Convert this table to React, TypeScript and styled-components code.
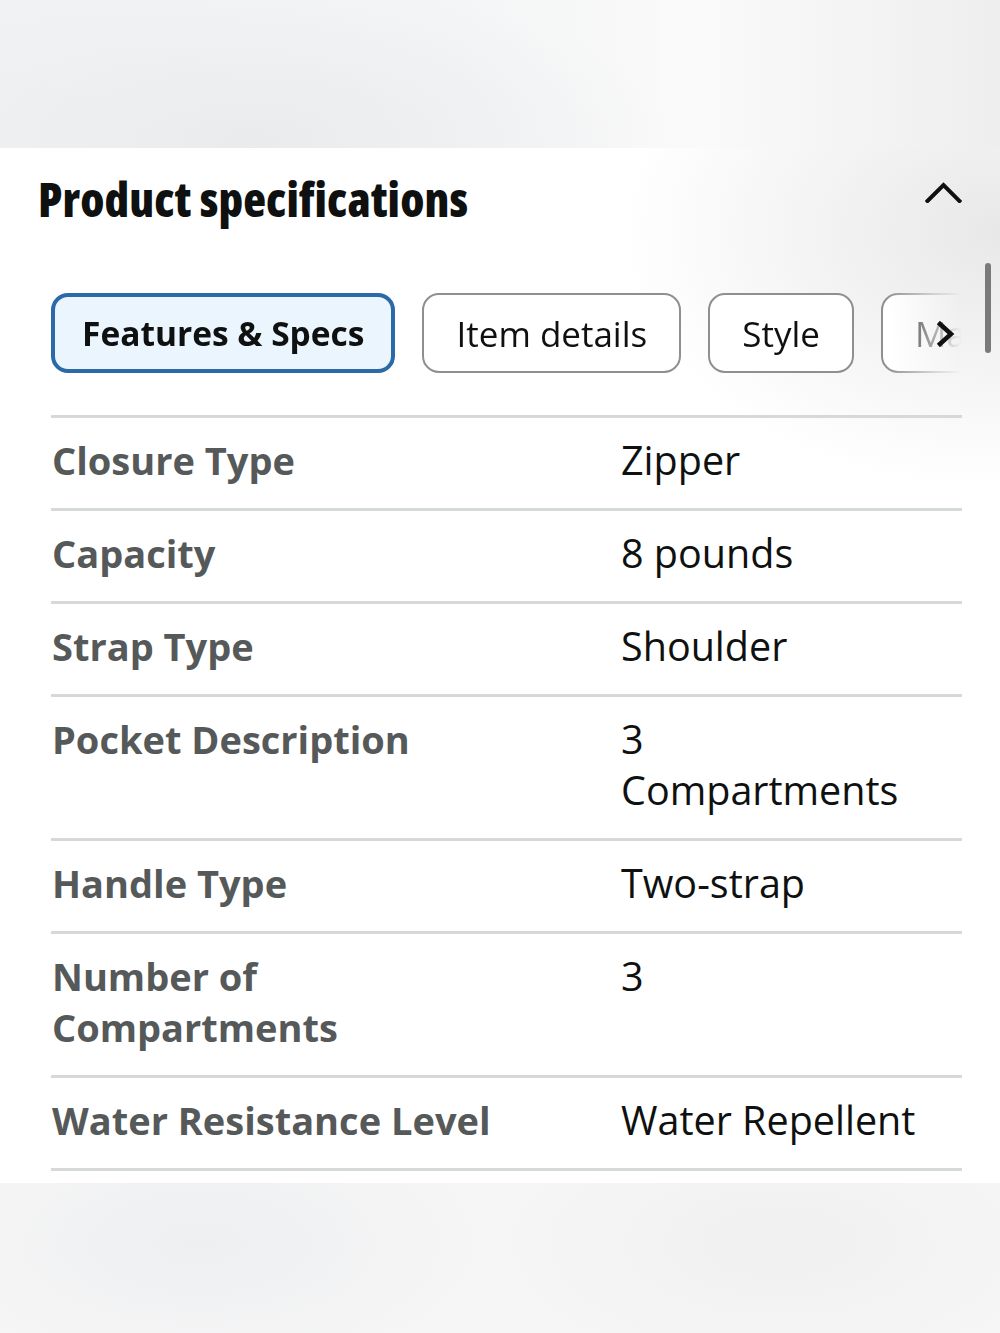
import React from "react";
import styled, { createGlobalStyle } from "styled-components";

const Global = createGlobalStyle`
  html, body { margin: 0; padding: 0; }
  body {
    background: #f3f3f4;
    font-family: "Open Sans", "Noto Sans", sans-serif;
    color: #0f1111;
  }
`;

const Page = styled.div`
  width: 1000px;
  height: 1333px;
  display: flex;
  flex-direction: column;
  overflow: hidden;
`;

const TopBand = styled.div`
  height: 148px;
  flex: none;
  background:
    radial-gradient(ellipse 420px 160px at 25% 95%, #e9ebed 0%, rgba(233,235,237,0) 100%),
    linear-gradient(90deg, #f1f2f3 0%, #f4f5f6 45%, #fafafa 70%, #eeeeef 100%);
`;

const Panel = styled.section`
  position: relative;
  height: 1035px;
  flex: none;
  box-sizing: border-box;
  padding: 25px 38px 0 38px;
  background:
    radial-gradient(ellipse 380px 260px at 100% 8%, #e8e8e8 0%, rgba(255,255,255,0) 100%),
    #ffffff;
`;

const Header = styled.header`
  display: flex;
  align-items: center;
  justify-content: space-between;
`;

const Title = styled.h2`
  margin: 0;
  font-size: 47px;
  line-height: 52px;
  font-weight: 800;
  font-stretch: condensed;
  letter-spacing: 0.1px;
  color: #0f1111;
`;

const Collapse = styled.button`
  border: 0;
  background: none;
  padding: 0;
  width: 37px;
  height: 22px;
  display: flex;
  cursor: pointer;
  margin-top: -14px;
`;

const TabsArea = styled.div`
  margin-top: 68px;
  margin-left: 13px;
  width: 911px;
  position: relative;
`;

const TabsTrack = styled.div`
  display: flex;
  gap: 27px;
  overflow: hidden;
  -webkit-mask-image: linear-gradient(90deg, #000 0, #000 835px, rgba(0,0,0,0.35) 880px, rgba(0,0,0,0) 911px);
  mask-image: linear-gradient(90deg, #000 0, #000 835px, rgba(0,0,0,0.35) 880px, rgba(0,0,0,0) 911px);
`;

const Tab = styled.button<{ $active?: boolean }>`
  flex: none;
  box-sizing: border-box;
  height: 80px;
  padding: 0 ${(p) => (p.$active ? "27px" : "32px")};
  border-radius: 17px;
  border: ${(p) => (p.$active ? "4px solid #2b6aa6" : "2px solid #8d9090")};
  background: ${(p) => (p.$active ? "#ebf5fd" : "#ffffff")};
  font-family: inherit;
  font-size: ${(p) => (p.$active ? "33.5px" : "35px")};
  font-weight: ${(p) => (p.$active ? 700 : 400)};
  color: #0f1111;
  display: flex;
  align-items: center;
  white-space: nowrap;
`;

const NextArrow = styled.span`
  position: absolute;
  left: 884px;
  top: 28px;
  width: 22px;
  height: 26px;
  display: flex;
`;

const ScrollThumb = styled.div`
  position: absolute;
  right: 9px;
  top: 115px;
  width: 6px;
  height: 90px;
  border-radius: 3px;
  background: #7a7a7a;
`;

const Table = styled.div`
  margin-top: 42px;
  margin-left: 13px;
  width: 911px;
  border-top: 3px solid #d5d9d9;
`;

const Row = styled.div`
  display: grid;
  grid-template-columns: 570px 1fr;
  padding: 17px 0 22px;
  border-bottom: 3px solid #d5d9d9;
`;

const Label = styled.div`
  padding-left: 1px;
  padding-right: 90px;
  font-size: 38px;
  line-height: 51px;
  font-weight: 700;
  color: #565959;
`;

const Value = styled.div`
  padding-right: 39px;
  font-size: 39.5px;
  line-height: 51px;
  font-weight: 400;
  color: #0f1111;
`;

const BottomBand = styled.div`
  flex: 1;
  background:
    radial-gradient(ellipse 300px 140px at 20% 40%, #eeeff0 0%, rgba(238,239,240,0) 100%),
    radial-gradient(ellipse 300px 140px at 78% 40%, #f0f0f1 0%, rgba(240,240,241,0) 100%),
    #f6f6f7;
`;

const specs: [string, string][] = [
  ["Closure Type", "Zipper"],
  ["Capacity", "8 pounds"],
  ["Strap Type", "Shoulder"],
  ["Pocket Description", "3 Compartments"],
  ["Handle Type", "Two-strap"],
  ["Number of Compartments", "3"],
  ["Water Resistance Level", "Water Repellent"],
];

const tabs = ["Features & Specs", "Item details", "Style", "Materials & Care"];

export default function App() {
  return (
    <>
      <Global />
      <Page>
        <TopBand />
        <Panel>
          <Header>
            <Title>Product specifications</Title>
            <Collapse aria-label="Collapse">
              <svg width="37" height="22" viewBox="0 0 37 22" fill="none">
                <polyline
                  points="2.5,20 18.5,4 34.5,20"
                  stroke="#0f1111"
                  strokeWidth="4"
                  strokeLinecap="square"
                  strokeLinejoin="miter"
                />
              </svg>
            </Collapse>
          </Header>
          <TabsArea>
            <TabsTrack>
              {tabs.map((t, i) => (
                <Tab key={t} $active={i === 0}>
                  {t}
                </Tab>
              ))}
            </TabsTrack>
            <NextArrow>
              <svg width="22" height="26" viewBox="0 0 22 26" fill="none">
                <polyline
                  points="5,3 16,13 5,23"
                  stroke="#0f1111"
                  strokeWidth="4.5"
                  strokeLinecap="square"
                />
              </svg>
            </NextArrow>
          </TabsArea>
          <ScrollThumb />
          <Table>
            {specs.map(([k, v]) => (
              <Row key={k}>
                <Label>{k}</Label>
                <Value>{v}</Value>
              </Row>
            ))}
          </Table>
        </Panel>
        <BottomBand />
      </Page>
    </>
  );
}
